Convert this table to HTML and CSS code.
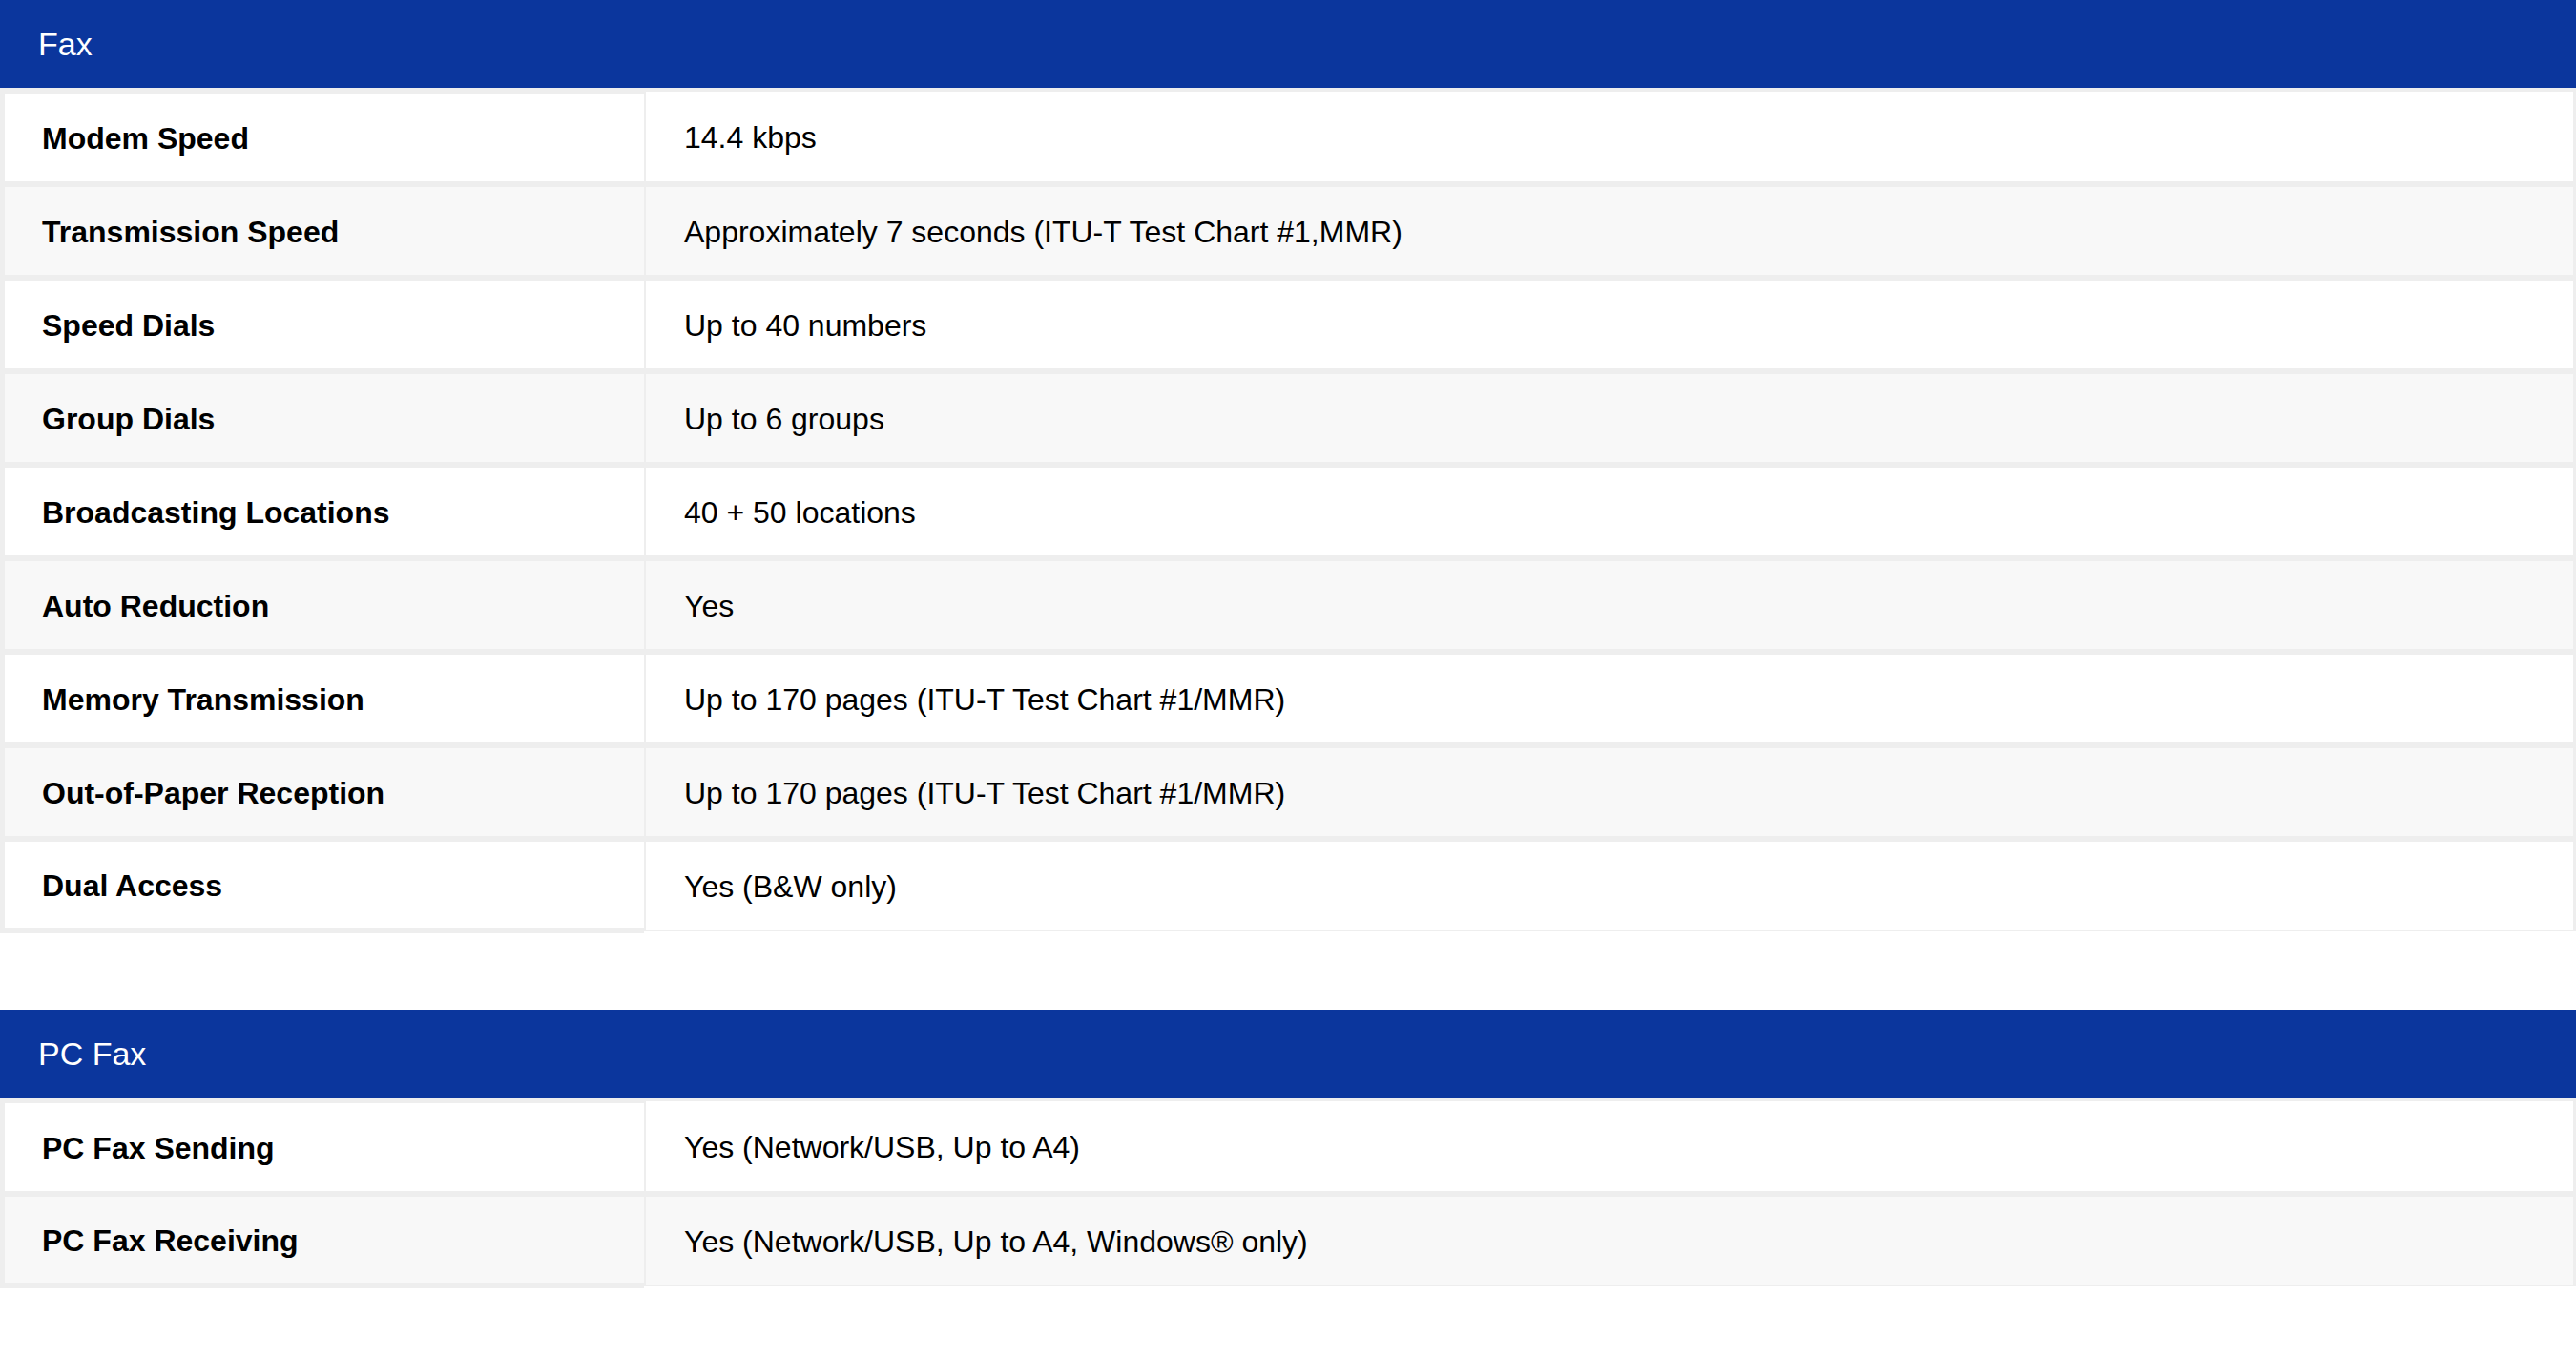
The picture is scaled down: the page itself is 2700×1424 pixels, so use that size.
FILE: index.html
```html
<!DOCTYPE html>
<html lang="en">
<head>
<meta charset="utf-8">
<title>Fax specifications</title>
<link rel="stylesheet" href="styles.css">
</head>
<body>
<section class="spec">
  <h2 class="spec-title">Fax</h2>
  <div class="spec-body">
    <div class="row"><div class="k">Modem Speed</div><div class="v">14.4 kbps</div></div>
    <div class="row"><div class="k">Transmission Speed</div><div class="v">Approximately 7 seconds (ITU-T Test Chart #1,MMR)</div></div>
    <div class="row"><div class="k">Speed Dials</div><div class="v">Up to 40 numbers</div></div>
    <div class="row"><div class="k">Group Dials</div><div class="v">Up to 6 groups</div></div>
    <div class="row"><div class="k">Broadcasting Locations</div><div class="v">40 + 50 locations</div></div>
    <div class="row"><div class="k">Auto Reduction</div><div class="v">Yes</div></div>
    <div class="row"><div class="k">Memory Transmission</div><div class="v">Up to 170 pages (ITU-T Test Chart #1/MMR)</div></div>
    <div class="row"><div class="k">Out-of-Paper Reception</div><div class="v">Up to 170 pages (ITU-T Test Chart #1/MMR)</div></div>
    <div class="row"><div class="k">Dual Access</div><div class="v">Yes (B&amp;W only)</div></div>
  </div>
</section>
<section class="spec">
  <h2 class="spec-title">PC Fax</h2>
  <div class="spec-body">
    <div class="row"><div class="k">PC Fax Sending</div><div class="v">Yes (Network/USB, Up to A4)</div></div>
    <div class="row"><div class="k">PC Fax Receiving</div><div class="v">Yes (Network/USB, Up to A4, Windows® only)</div></div>
  </div>
</section>
</body>
</html>
```
FILE: styles.css
```css
html, body {
  margin: 0;
  padding: 0;
  background: #ffffff;
}
body {
  font-family: "Liberation Sans", Arial, Helvetica, sans-serif;
  color: #000;
}
.spec {
  margin: 0 0 80px 0;
}
.spec-title {
  margin: 0;
  height: 92px;
  background: #0b369d;
  color: #ffffff;
  font-size: 34px;
  font-weight: 400;
  line-height: 92px;
  padding-left: 40px;
}
.spec-body {
  display: flex;
  flex-direction: column;
}
.row {
  display: flex;
  align-items: flex-start;
}
.k, .v {
  display: flex;
  align-items: center;
  font-size: 32px;
  height: 90px;
  padding-top: 2px;
  border-top: 3px solid #eeeeee;
  border-bottom: 3px solid #eeeeee;
  background: #ffffff;
}
.row:nth-child(even) .k,
.row:nth-child(even) .v {
  background: #f8f8f8;
}
.k {
  width: 631px;
  flex: none;
  border-left: 5px solid #eeeeee;
  padding-left: 39px;
  font-weight: 700;
}
.v {
  flex: 1;
  border-left: 2px solid #eeeeee;
  border-right: 3px solid #eeeeee;
  padding-left: 40px;
  font-weight: 400;
}
.row:first-child .k {
  border-top-width: 6px;
}
.row:first-child .v {
  border-top-width: 4px;
  height: 92px;
}
.row:last-child .k {
  height: 88px;
  border-bottom-width: 6px;
}
.row:last-child .v {
  border-bottom-width: 2px;
}
```
